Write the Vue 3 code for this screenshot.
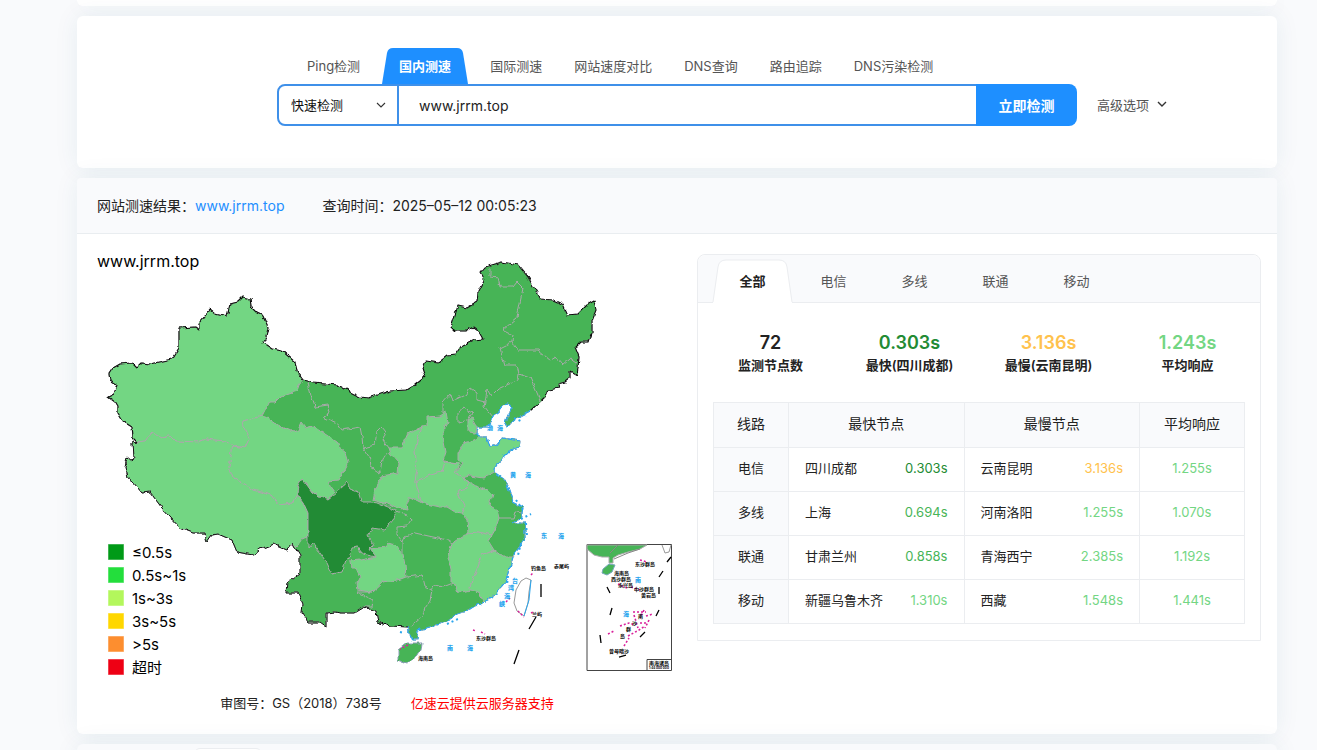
<script setup>
import { ref } from 'vue'

const tools = ['Ping检测', '国内测速', '国际测速', '网站速度对比', 'DNS查询', '路由追踪', 'DNS污染检测']
const activeTool = ref('国内测速')
const host = ref('www.jrrm.top')
const lines = ['全部', '电信', '多线', '联通', '移动']
const activeLine = ref('全部')

const stats = [
  { value: '72', label: '监测节点数', tone: 'plain' },
  { value: '0.303s', label: '最快(四川成都)', tone: 'best' },
  { value: '3.136s', label: '最慢(云南昆明)', tone: 'slow' },
  { value: '1.243s', label: '平均响应', tone: 'fair' },
]

const rows = [
  { line: '电信', fast: '四川成都', fastTime: '0.303s', fastTone: 'best', slow: '云南昆明', slowTime: '3.136s', slowTone: 'slow', avg: '1.255s' },
  { line: '多线', fast: '上海', fastTime: '0.694s', fastTone: 'good', slow: '河南洛阳', slowTime: '1.255s', slowTone: 'fair', avg: '1.070s' },
  { line: '联通', fast: '甘肃兰州', fastTime: '0.858s', fastTone: 'good', slow: '青海西宁', slowTime: '2.385s', slowTone: 'fair', avg: '1.192s' },
  { line: '移动', fast: '新疆乌鲁木齐', fastTime: '1.310s', fastTone: 'fair', slow: '西藏', slowTime: '1.548s', slowTone: 'fair', avg: '1.441s' },
]

const legend = [
  { color: '#009a17', text: '≤0.5s' },
  { color: '#23de3c', text: '0.5s~1s' },
  { color: '#b3f75c', text: '1s~3s' },
  { color: '#ffd700', text: '3s~5s' },
  { color: '#fd8e2f', text: '>5s' },
  { color: '#ee0014', text: '超时' },
]

// Land border drawn in black, sea coast drawn in blue
const north = 'M137 442L132 437 131 426 123 421 118 413 118 407 115 402 108 397 114 394 117 385 110 381 109 374 113 368 120 364 132 363 137 368 142 363 150 364 172 359 179 348 179 328 195 327 199 330 199 323 210 310 215 314 227 317 230 304 238 302 243 297 250 299 251 307 257 313 263 316 268 328 266 337 263 343 272 349 282 351 295 362 298 373 303 380 313 383 338 385 350 392 360 397 369 398 390 391 407 390 415 385 425 377 422 368 425 361 438 363 447 356 455 355 462 345 473 340 484 339 480 332 473 327 467 331 455 331 451 327 458 306 467 308 477 302 478 292 484 280 480 273 485 267 502 262 518 265 528 277 537 293 540 299 553 300 562 304 567 315 578 314 587 305 594 301 596 310 592 320 592 333 589 342 580 342 575 347 579 357 578 368 577 375 570 371 570 378 565 382 558 384 560 388 548 390 545 397 530 411'
const coast = '517 418 507 427 505 423 507 417 512 408 508 403 503 404 500 412 492 417 488 427 477 427 476 433 480 437 487 437 490 447 497 445 502 438 520 441 519 447 510 450 502 458 495 468 495 473 505 480 510 493 513 502 523 507 522 513 522 517 513 523 525 523 525 537 518 550 513 557 508 573 505 582 492 598 483 602 470 610 455 615 447 622 430 627 418 630 417 640 412 640 409 632 408 627'
const southwest = '390 626 378 622 376 612 363 607 353 613 340 613 335 612 327 613 327 627 320 622 308 622 302 613 303 604 298 593 286 593 287 583 300 573 300 555 295 547 293 543 287 550 273 544 260 549 253 555 237 552 232 540 218 534 212 535 207 542 205 533 193 533 180 528 170 517 162 508 150 492 142 493 133 482 127 477 125 468 127 457 132 461 134 457 133 443'

const lightAreas = [
  'M137 442L132 437 131 426 123 421 118 413 118 407 115 402 108 397 114 394 117 385 110 381 109 374 113 368 120 364 132 363 137 368 142 363 150 364 172 359 179 348 179 328 195 327 199 330 199 323 210 310 215 314 227 317 230 304 238 302 243 297 250 299 251 307 257 313 263 316 268 328 266 337 263 343 272 349 282 351 295 362 298 373 303 380 299 385 297 391 290 393 280 397 275 402 269 402 262 416 243 421 245 430 249 439 245 448 233 446 225 441 205 439 198 442 175 441 170 436 162 438 152 433 145 441Z',
  'M137 442L133 443 134 457 132 461 127 457 125 468 127 477 133 482 142 493 150 492 162 508 170 517 180 528 193 533 205 533 207 542 212 535 218 534 232 540 237 552 253 555 260 549 273 544 287 550 293 543 297 547 303 539 308 537 308 513 303 502 297 494 292 503 280 505 272 495 253 490 233 477 229 467 233 446 225 441 205 439 198 442 175 441 170 436 162 438 152 433 145 441Z',
  'M243 421L262 416 268 418 278 425 293 432 298 430 301 423 305 428 313 426 325 434 337 442 339 447 345 452 348 462 343 472 338 480 328 481 331 487 335 492 328 500 320 497 312 492 307 485 302 479 298 485 297 494 292 503 280 505 272 495 253 490 233 477 229 467 233 446 245 448 249 439 245 430Z',
  'M388 447L402 447 408 433 422 427 418 437 415 450 417 470 415 482 418 493 422 503 410 497 407 503 408 510 397 508 383 503 373 500 375 490 382 476 398 473 399 463 390 453Z',
  'M422 427L427 425 427 417 440 416 446 412 448 423 443 432 444 442 446 452 443 461 445 462 442 472 427 476 415 482 417 470 415 450 418 437Z',
  'M415 482L427 476 442 472 445 462 460 463 455 473 463 478 470 482 468 488 458 490 460 498 465 507 462 513 455 512 447 507 440 507 422 503 418 493Z',
  'M463 478L470 482 478 487 487 490 492 495 489 505 497 510 499 518 495 530 492 535 478 532 468 533 467 520 462 513 465 507 460 498 458 490 468 488 470 482Z',
  'M458 453L463 443 475 440 480 437 487 437 490 447 497 445 502 438 520 441 519 447 510 450 502 458 495 468 495 473 483 478 470 476 463 478 455 473 463 463 458 460Z',
  'M468 420L472 418 476 425 475 433 468 432Z',
  'M388 543L395 545 403 555 405 565 406 577 398 580 383 582 372 592 358 590 357 583 360 577 356 568 351 568 350 561 360 560 376 557 370 549 385 547Z',
  'M448 555L452 543 468 533 478 532 492 535 489 542 494 550 482 555 478 567 472 580 470 590 458 593 455 585 451 582 451 568 447 558Z',
  'M494 550L503 557 513 557 508 573 505 582 492 598 483 602 480 593 470 588 472 580 478 567 482 555Z',
]
const sichuan = 'M297 494L298 485 302 479 307 485 312 492 320 497 328 500 337 493 342 487 347 483 350 489 358 492 361 502 370 502 378 503 388 507 397 511 393 520 385 530 372 528 368 535 373 545 370 548 376 557 367 555 360 552 357 547 353 548 350 558 347 557 342 572 332 574 327 563 320 553 312 543 308 548 308 537 308 513 303 502Z'
const innerBorders = 'M458 413L463 407 472 413 468 420 458 423ZM443 413L443 402 450 394 452 401 465 395 470 388 477 393 477 400 485 402 484 407 492 417M485 402L487 390 491 397 500 388 518 380 519 373 530 377 535 388 540 400M519 373L517 365 505 365 500 348 512 342 518 350 538 350 550 360 555 357 562 365 570 358 577 363M512 342L513 335 503 330 517 318 520 303 523 288 517 282 513 287 500 287 498 278 490 277 490 268M308 383L311 395 315 407 328 405 330 412 323 417 337 423 342 430 360 427 362 437 363 448 375 445 377 432 382 427 386 432 383 440 388 447M363 448L370 458 371 467 380 473 382 460 388 452M397 511L407 515 412 520 408 526 397 527 397 535 403 542 405 537 415 533 433 537 448 540 452 543M403 542L403 555M406 577L422 575 425 587 432 590 435 585 443 587 453 583M432 590L430 600 425 607 422 617 410 627M372 592L357 592 373 600 372 607 363 607M499 518L513 518 515 512 522 513M444 461L458 463'

const seaLabels = [
  { x: 487, y: 430, t: '渤' }, { x: 497, y: 430, t: '海' },
  { x: 510, y: 477, t: '黄' }, { x: 525, y: 477, t: '海' },
  { x: 541, y: 538, t: '东' }, { x: 558, y: 538, t: '海' },
  { x: 447, y: 650, t: '南' }, { x: 467, y: 650, t: '海' },
  { x: 512, y: 583, t: '台' }, { x: 508, y: 590, t: '湾' },
  { x: 504, y: 598, t: '海' }, { x: 499, y: 606, t: '峡' },
  { x: 635, y: 582, t: '南' }, { x: 623, y: 616, t: '海' },
]
const isles = [
  { x: 531, y: 570, t: '钓鱼岛' }, { x: 554, y: 568, t: '赤尾屿' }, { x: 532, y: 616, t: '兰屿' },
  { x: 476, y: 640, t: '东沙群岛' }, { x: 418, y: 660, t: '海南岛' }, { x: 635, y: 566, t: '东沙群岛' },
  { x: 614, y: 575, t: '海南岛' }, { x: 611, y: 581, t: '西沙群岛' }, { x: 618, y: 587, t: '永兴岛' },
  { x: 634, y: 591, t: '中沙群岛' }, { x: 641, y: 597, t: '黄岩岛' }, { x: 638, y: 618, t: '南' },
  { x: 632, y: 625, t: '沙' }, { x: 626, y: 631, t: '群' }, { x: 620, y: 638, t: '岛' }, { x: 609, y: 653, t: '曾母暗沙' },
]
</script>

<template>
  <div class="page">
    <section class="card card-above"></section>

    <section class="card search-card">
      <nav class="tools">
        <button v-for="t in tools" :key="t" type="button" class="tool" :class="{ active: t === activeTool }" @click="activeTool = t">
          <svg v-if="t === activeTool" class="tool-shape" viewBox="0 0 86 36" preserveAspectRatio="none" aria-hidden="true">
            <path d="M0 36L5 5Q6 0 11 0H75Q80 0 81 5L86 36Z" fill="#1e8fff" />
          </svg>
          <span>{{ t }}</span>
        </button>
      </nav>
      <div class="search-row">
        <form class="search" @submit.prevent>
          <div class="mode">
            <select aria-label="检测方式">
              <option>快速检测</option>
            </select>
            <svg class="chevron" viewBox="0 0 10 6" aria-hidden="true"><path d="M1 1L5 5 9 1" fill="none" stroke="#333" stroke-width="1.1" /></svg>
          </div>
          <input v-model="host" type="text" aria-label="网址" />
          <button type="submit">立即检测</button>
        </form>
        <button type="button" class="advanced">
          高级选项
          <svg class="chevron" viewBox="0 0 10 6" aria-hidden="true"><path d="M1 1L5 5 9 1" fill="none" stroke="#333" stroke-width="1.4" /></svg>
        </button>
      </div>
    </section>

    <section class="card">
      <header class="result-head">
        <span>网站测速结果：<a href="#">www.jrrm.top</a></span>
        <span>查询时间：2025–05–12 00:05:23</span>
      </header>
      <div class="result-body">
        <div class="map-column">
          <svg class="map" viewBox="97 254 580 424" role="img" aria-label="全国测速地图">
            <defs>
              <filter id="rough" x="-2%" y="-2%" width="104%" height="104%">
                <feTurbulence type="fractalNoise" baseFrequency="0.14" numOctaves="2" seed="4" result="n" />
                <feDisplacementMap in="SourceGraphic" in2="n" scale="5" xChannelSelector="R" yChannelSelector="G" />
              </filter>
            </defs>
            <text x="97" y="267" class="map-title">www.jrrm.top</text>

            <g filter="url(#rough)" stroke-linejoin="round">
              <path :d="`${north} ${coast} ${southwest}Z`" fill="#47b457" stroke="#aaa" stroke-width="1" />
              <g fill="#73d683" stroke="#aaa" stroke-width="1">
                <path v-for="(d, i) in lightAreas" :key="i" :d="d" />
              </g>
              <path :d="sichuan" fill="#238b34" stroke="#aaa" stroke-width="1" />
              <path :d="innerBorders" fill="none" stroke="#aaa" stroke-width="1" />
              <path :d="north" fill="none" stroke="#111" stroke-width="1.1" />
              <path :d="`M408 627L${southwest}L137 442`" fill="none" stroke="#111" stroke-width="1" />
              <path :d="`M530 411L${coast}`" fill="none" stroke="#2ba6ee" stroke-width="1.2" stroke-dasharray="9 1 4 1" />
              <path d="M398 650L407 643 422 643 421 650 416 658 407 663 398 660Z" fill="#47b457" stroke="#8a9db5" stroke-width="1" />
            </g>
            <path d="M526 578L531 580 529 592 528 603 524 616 517 611 514 603 516 590 521 581Z" fill="#fff" stroke="#999" stroke-width="1" />
            <path d="M531 580L529 600 524 616" fill="none" stroke="#2ba6ee" stroke-width="1" />

            <g fill="none" stroke="#2ba6ee" stroke-width="2" stroke-dasharray="2 3">
              <path d="M514 418L523 422M516 500L523 510M521 519L531 514M526 523L527 536M521 543L518 555M508 576L507 585M447 624L458 619M400 632L404 633" />
            </g>
            <g fill="none" stroke="#d9219b" stroke-width="1.5" stroke-dasharray="2 2">
              <path d="M506 602L510 598M473 630L476 631M481 632L485 634M531 575L533 573M518 611L524 617M531 613L533 612M408 645L400 649" />
            </g>
            <path d="M541 584V597M536 617L529 629M519 650L514 664" stroke="#000" stroke-width="1.3" />

            <g>
              <path d="M587 670.500V544.500H671.500V670.500Z" fill="#fff" stroke="#444" stroke-width="1" />
              <path d="M587 545H647L640 549 628 552 618 555 613 558 613 563 609 563 609 557 602 557 594 555 587 549Z" fill="#47b457" stroke="#aaa" stroke-width="1" />
              <path d="M618 545L610 553M640 549L628 553 614 559" fill="none" stroke="#888" stroke-width="1" />
              <path d="M603 569L609 564 615 565 612 572 607 575 602 573Z" fill="#47b457" stroke="#78a6bd" stroke-width="1" />
              <path d="M662 545L665 553 669 552 671 545" fill="none" stroke="#999" stroke-width="1" />
              <path d="M671 557L667 562M663 571L659 577M659 587V594M659 610L656 616M645 632L640 637M607 587L610 593M612 608L610 615M600 635L601 643M626 655L619 657" stroke="#000" stroke-width="1.3" />
              <g fill="none" stroke="#d9219b" stroke-width="1.6" stroke-dasharray="2 2">
                <path d="M640 560L647 562M618 584L627 588M631 587L640 590M633 612L646 612M644 610L640 618M620 626L629 623 635 625M608 634L614 631M628 636L639 630 645 626M634 615L638 628M640 623L648 623M646 616L653 614M624 646L629 638M649 620L645 628" />
              </g>
              <path d="M647 670V659.500H671" fill="#fff" stroke="#444" stroke-width="1" />
              <text x="649" y="665" class="isle">南海诸岛</text>
              <text x="649" y="669" class="scale">1:44 000 000</text>
            </g>

            <text v-for="(s, i) in seaLabels" :key="'s' + i" :x="s.x" :y="s.y" class="sea">{{ s.t }}</text>
            <text v-for="(s, i) in isles" :key="'i' + i" :x="s.x" :y="s.y" class="isle">{{ s.t }}</text>

            <g v-for="(l, i) in legend" :key="l.text">
              <rect x="108" :y="544 + i * 23" width="16" height="16" :fill="l.color" stroke="#fff" stroke-opacity=".5" />
              <text x="132" :y="558 + i * 23" class="legend">{{ l.text }}</text>
            </g>
          </svg>
          <p class="map-note">
            <span>审图号：GS（2018）738号</span>
            <a href="#">亿速云提供云服务器支持</a>
          </p>
        </div>

        <div class="panel">
          <nav class="lines">
            <button v-for="l in lines" :key="l" type="button" class="line" :class="{ active: l === activeLine }" @click="activeLine = l">
              <svg v-if="l === activeLine" class="line-shape" viewBox="0 0 81 44" aria-hidden="true">
                <path d="M1 44L6 8Q7 1 14 1H67Q74 1 75 8L80 44Z" fill="#fff" />
                <path d="M1 43L6 8Q7 1 14 1H67Q74 1 75 8L80 43" fill="none" stroke="#ebedf0" />
              </svg>
              <span>{{ l }}</span>
            </button>
          </nav>
          <div class="stats">
            <div v-for="s in stats" :key="s.label" class="stat">
              <strong :class="s.tone">{{ s.value }}</strong>
              <span>{{ s.label }}</span>
            </div>
          </div>
          <table>
            <colgroup><col class="c-line" /><col class="c-node" /><col class="c-node" /><col class="c-avg" /></colgroup>
            <thead>
              <tr><th>线路</th><th>最快节点</th><th>最慢节点</th><th>平均响应</th></tr>
            </thead>
            <tbody>
              <tr v-for="r in rows" :key="r.line">
                <th scope="row">{{ r.line }}</th>
                <td><div class="node"><span>{{ r.fast }}</span><span :class="r.fastTone">{{ r.fastTime }}</span></div></td>
                <td><div class="node"><span>{{ r.slow }}</span><span :class="r.slowTone">{{ r.slowTime }}</span></div></td>
                <td class="fair">{{ r.avg }}</td>
              </tr>
            </tbody>
          </table>
        </div>
      </div>
    </section>

    <section class="card card-below">
      <span class="below-tab"></span>
    </section>
  </div>
</template>

<style>
body {
  background: #f9fafc;
}
</style>

<style scoped>
.page {
  box-sizing: border-box;
  height: 100vh;
  overflow: hidden;
  padding: 0 40px 0 77px;
  display: flex;
  flex-direction: column;
  gap: 10px;
  font-family: Inter, "Noto Sans CJK SC", sans-serif;
  font-size: 13px;
  color: #222;
}
.page * {
  box-sizing: border-box;
}
button, select, input {
  font: inherit;
  color: inherit;
  border: 0;
  background: none;
  padding: 0;
  margin: 0;
}
a {
  text-decoration: none;
}
.card {
  flex: none;
  background: #fff;
  border-radius: 6px;
  box-shadow: 0 0 24px rgba(30, 90, 110, 0.08);
}
.card-above {
  height: 6px;
  border-radius: 0 0 6px 6px;
}
.search-card {
  padding: 32px 0 42px;
}
.tools {
  width: 800px;
  max-width: 100%;
  margin: 0 auto;
  padding-left: 14px;
  display: flex;
}
.tool {
  position: relative;
  height: 36px;
  padding: 0 16px 2px;
  color: #555;
}
.tool.active {
  margin: 0 6px;
  padding: 0 17px 2px;
  color: #fff;
  font-weight: 600;
}
.tool span, .line span {
  position: relative;
}
.tool-shape {
  position: absolute;
  left: 0;
  bottom: 0;
  width: 100%;
  height: 36px;
}
.search-row {
  display: grid;
  grid-template-columns: 1fr minmax(0, 800px) 1fr;
}
.search {
  grid-column: 2;
  display: flex;
  height: 42px;
}
.mode {
  position: relative;
  width: 122px;
  border: 2px solid #3f90e9;
  border-radius: 8px 0 0 8px;
}
.mode select {
  width: 100%;
  height: 100%;
  padding-left: 12px;
  appearance: none;
  color: #111;
}
.chevron {
  width: 10px;
  height: 6px;
}
.mode .chevron {
  position: absolute;
  right: 11px;
  top: 16px;
  pointer-events: none;
}
.search input {
  flex: 1;
  min-width: 0;
  padding-left: 20px;
  border: solid #3f90e9;
  border-width: 2px 0;
  font-size: 14px;
}
.search button {
  width: 101px;
  border-radius: 0 8px 8px 0;
  background: #1e8fff;
  color: #fff;
  font-size: 14px;
  font-weight: 600;
}
.advanced {
  justify-self: start;
  padding: 0 0 2px 20px;
  display: flex;
  align-items: center;
  gap: 8px;
  color: #555;
}
.result-head {
  height: 56px;
  padding: 0 20px 2px;
  display: flex;
  align-items: center;
  gap: 38px;
  background: #f9fafc;
  border-bottom: 1px solid #e9edf0;
  border-radius: 4px 4px 0 0;
  font-size: 14px;
}
.result-head a {
  color: #1e8fff;
}
.result-body {
  padding: 20px 16px 20px 20px;
  display: grid;
  grid-template-columns: 580fr 564fr;
  gap: 20px;
  align-items: start;
}
.map {
  display: block;
  width: 100%;
  overflow: visible;
}
.map-title {
  font-size: 16px;
  fill: #000;
}
.legend {
  font-size: 15px;
  fill: #000;
}
.sea {
  font-size: 6px;
  font-weight: 900;
  fill: #2ba6ee;
}
.isle {
  font-size: 5px;
  font-weight: 700;
  fill: #000;
}
.scale {
  font-size: 3px;
  font-weight: 700;
  fill: #000;
}
.map-note {
  margin: 15px 0 0;
  display: flex;
  justify-content: center;
  gap: 29px;
  line-height: 21px;
}
.map-note a {
  color: #f00;
}
.panel {
  border: 1px solid #ebedf0;
  border-radius: 8px 8px 0 0;
  padding-bottom: 16px;
}
.lines {
  height: 48px;
  padding-left: 14px;
  display: flex;
  background: #f9fafc;
  border-bottom: 1px solid #ebedf0;
  border-radius: 8px 8px 0 0;
}
.line {
  position: relative;
  width: 81px;
  height: 50px;
  color: #555;
}
.line.active {
  color: #222;
  font-weight: 600;
}
.line-shape {
  position: absolute;
  left: 0;
  top: 4px;
  width: 81px;
  height: 44px;
}
.stats {
  padding: 28px 3px 26px;
  display: grid;
  grid-template-columns: repeat(4, 1fr);
}
.stat {
  display: flex;
  flex-direction: column;
  align-items: center;
  font-weight: 600;
}
.stat strong {
  font-size: 18px;
  line-height: 24px;
  font-weight: 600;
}
.stat span {
  line-height: 21px;
}
table {
  width: calc(100% - 30px);
  margin: 0 15px;
  border-collapse: collapse;
  table-layout: fixed;
}
.c-line { width: 75px; }
.c-avg { width: 105px; }
th, td {
  height: 44px;
  padding: 0 16px 3px;
  border: 1px solid #ebedf0;
  text-align: center;
  font-weight: 400;
  line-height: 20px;
}
th {
  padding: 0 0 3px;
  background: #f9fafc;
}
thead th {
  height: 45px;
  font-size: 14px;
}
.node {
  display: flex;
  justify-content: space-between;
}
.best { color: #238b34; }
.good { color: #47b457; }
.fair { color: #73d683; }
.slow { color: #ffc24d; }
.card-below {
  height: 56px;
  padding: 4px 0 0 117px;
  background: #f9fafc;
}
.below-tab {
  display: block;
  width: 68px;
  height: 52px;
  border: 1px solid #ebedf0;
  border-radius: 6px 6px 0 0;
  background: #fff;
}
</style>
